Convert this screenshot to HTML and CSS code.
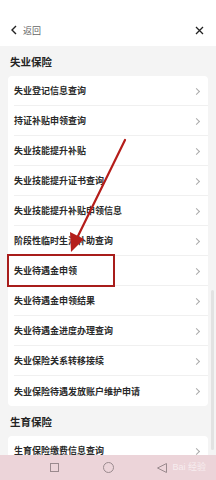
FILE: index.html
```html
<!DOCTYPE html>
<html lang="zh">
<head>
<meta charset="utf-8">
<title>失业保险</title>
<link rel="stylesheet" href="styles.css">
</head>
<body>
<div class="screen">
  <div class="status"></div>
  <div class="header">
    <div class="back">
      <svg class="back-icon" width="8" height="10" viewBox="0 0 8 10"><path d="M6 1 L2 5 L6 9" fill="none" stroke="#222" stroke-width="1.4"/></svg>
      <span class="back-text">返回</span>
    </div>
    <svg class="close-icon" width="9" height="9" viewBox="0 0 9 9"><path d="M1 1 L8 8 M8 1 L1 8" fill="none" stroke="#222" stroke-width="1.3"/></svg>
  </div>
  <div class="content">
    <div class="section-title">失业保险</div>
    <div class="card">
      <div class="row"><span>失业登记信息查询</span><i class="chev"></i></div>
      <div class="row"><span>持证补贴申领查询</span><i class="chev"></i></div>
      <div class="row"><span>失业技能提升补贴</span><i class="chev"></i></div>
      <div class="row"><span>失业技能提升证书查询</span><i class="chev"></i></div>
      <div class="row"><span>失业技能提升补贴申领信息</span><i class="chev"></i></div>
      <div class="row"><span>阶段性临时生活补助查询</span><i class="chev"></i></div>
      <div class="row"><span>失业待遇金申领</span><i class="chev"></i></div>
      <div class="row"><span>失业待遇金申领结果</span><i class="chev"></i></div>
      <div class="row"><span>失业待遇金进度办理查询</span><i class="chev"></i></div>
      <div class="row"><span>失业保险关系转移接续</span><i class="chev"></i></div>
      <div class="row last"><span>失业保险待遇发放账户维护申请</span><i class="chev"></i></div>
    </div>
    <div class="section-title">生育保险</div>
    <div class="card">
      <div class="row"><span>生育保险缴费信息查询</span><i class="chev"></i></div>
    </div>
  </div>
  <div class="scrollbar"></div>
  <div class="highlight"></div>
  <svg class="arrow" width="216" height="480" viewBox="0 0 216 480">
    <line x1="125" y1="140" x2="78" y2="236" stroke="#b51d1a" stroke-width="2.2" stroke-linecap="round"/>
    <polygon points="71,252 70,232 84,239" fill="#b51d1a"/>
  </svg>
  <div class="navbar">
    <span class="nav-square"></span>
    <span class="nav-circle"></span>
    <svg class="nav-back" width="12" height="12" viewBox="0 0 12 12"><path d="M10.5 1.5 L1.5 6 L10.5 10.5 Z" fill="none" stroke="#9a8a8e" stroke-width="1"/></svg>
    <span class="watermark">Bai 经验</span>
  </div>
</div>
</body>
</html>
```
FILE: styles.css
```css
* { box-sizing: border-box; margin: 0; padding: 0; }
html, body { width: 216px; height: 480px; overflow: hidden; }
body {
  font-family: "Noto Sans CJK SC", "Noto Sans", sans-serif;
  color: #222;
  background: #f4f4f4;
}
.screen { position: relative; width: 216px; height: 480px; overflow: hidden; background: #f4f4f4; }
.status { height: 14px; background: #fff; }
.header {
  height: 32px;
  background: #fff;
  display: flex;
  align-items: center;
  justify-content: space-between;
  padding: 0 12px 0 10px;
}
.back { display: flex; align-items: center; gap: 5px; }
.back-icon { display: block; }
.back-text { font-size: 9px; color: #666; line-height: 1; }
.close-icon { display: block; }
.content { padding: 0 8px; }
.section-title {
  height: 30px;
  display: flex;
  align-items: center;
  padding-left: 2px;
  font-size: 10.5px;
  font-weight: 700;
  color: #222;
}
.card { background: #fff; border-radius: 4px; padding-left: 6px; }
.row {
  height: 30px;
  display: flex;
  align-items: center;
  justify-content: space-between;
  border-bottom: 1px solid #f0f0f0;
  padding-right: 9px;
  font-size: 9px;
  font-weight: 700;
  color: #2a2a2a;
}
.row.last { border-bottom: none; }
.chev {
  width: 5px;
  height: 5px;
  border-top: 1px solid #aaa;
  border-right: 1px solid #aaa;
  transform: rotate(45deg);
  margin-top: 1px;
}
.scrollbar {
  position: absolute;
  right: 2px;
  top: 290px;
  width: 3px;
  height: 160px;
  background: #e2e2e2;
  border-radius: 2px;
}
.highlight {
  position: absolute;
  left: 7px;
  top: 254px;
  width: 108px;
  height: 33px;
  border: 2.5px solid #a81d1b;
}
.arrow { position: absolute; left: 0; top: 0; pointer-events: none; }
.navbar {
  position: absolute;
  left: 0;
  bottom: 0;
  width: 216px;
  height: 25px;
  background: #ecd4d9;
  display: grid;
  grid-template-columns: repeat(3, 54px);
  justify-items: center;
  align-items: center;
  padding-left: 27px;
}
.nav-square { width: 9px; height: 9px; border: 1px solid #9a8a8e; }
.nav-circle { width: 11px; height: 11px; border: 1px solid #9a8a8e; border-radius: 50%; }
.nav-back { display: block; }
.watermark {
  position: absolute;
  right: 10px;
  top: 5px;
  font-size: 9px;
  color: rgba(255,255,255,0.6);
  font-family: "Liberation Sans", "Noto Sans CJK SC", sans-serif;
}
```
